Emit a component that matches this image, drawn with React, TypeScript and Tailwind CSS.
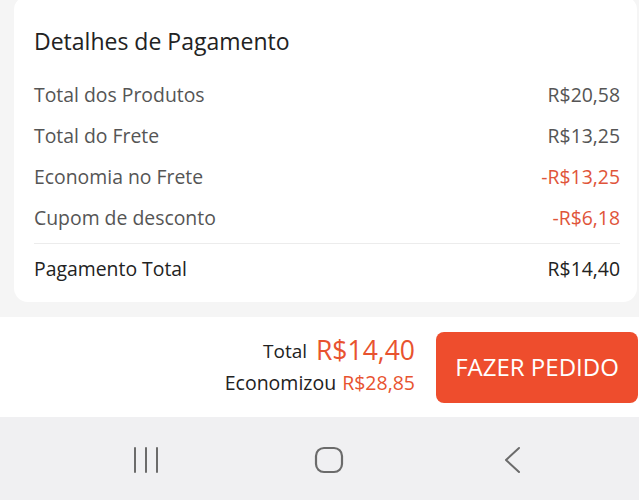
import type { ReactNode } from 'react';

// Linha simples de resumo: rótulo à esquerda, valor à direita
function Row({ label, value, accent }: { label: string; value: string; accent?: boolean }) {
  return (
    <div className="flex h-[41px] items-center justify-between">
      <span className="text-[19.4px] text-[#555555]">{label}</span>
      <span className={accent ? 'text-[19.4px] text-[#e0553a]' : 'text-[19.4px] text-[#555555]'}>{value}</span>
    </div>
  );
}

function NavButton({ children }: { children: ReactNode }) {
  return <div className="flex h-[26px] w-[40px] items-center justify-center">{children}</div>;
}

export default function App() {
  return (
    <div className="flex h-[500px] w-[639px] flex-col overflow-hidden bg-[#f5f5f5] font-['Open_Sans',sans-serif]">
      {/* Card de detalhes */}
      <div className="-mt-[4px] ml-[14px] mr-[2px] rounded-[14px] bg-white pl-[20px] pr-[17px] pt-[30px] pb-[8px]">
        <h2 className="mb-[18px] h-[30px] text-[23px] leading-[30px] text-[#222222]">Detalhes de Pagamento</h2>
        <Row label="Total dos Produtos" value="R$20,58" />
        <Row label="Total do Frete" value="R$13,25" />
        <Row label="Economia no Frete" value="-R$13,25" accent />
        <Row label="Cupom de desconto" value="-R$6,18" accent />
        <div className="mt-[5px] h-px bg-[#ececec]" />
        <div className="flex h-[50px] items-center justify-between text-[19.4px] text-[#222222]">
          <span>Pagamento Total</span>
          <span>R$14,40</span>
        </div>
      </div>

      {/* Barra inferior com total e botão */}
      <div className="mt-[15px] flex h-[100px] items-center justify-end bg-white pr-[1px]">
        <div className="mr-[21px] flex flex-col items-end">
          <div className="flex h-[32px] items-center gap-[9px]">
            <span className="text-[19px] text-[#222222]">Total</span>
            <span className="text-[26.5px] text-[#e8532f]">R$14,40</span>
          </div>
          <div className="flex h-[32px] items-center gap-[6px] text-[19.5px]">
            <span className="text-[#222222]">Economizou</span>
            <span className="text-[#e8532f]">R$28,85</span>
          </div>
        </div>
        <button className="flex h-[71px] w-[202px] items-center justify-center rounded-[8px] bg-[#ee4d2d] text-[24px] text-white">
          FAZER PEDIDO
        </button>
      </div>

      {/* Barra de navegação do sistema */}
      <div className="flex flex-1 items-center bg-[#f0f0f2] pl-[126px] pt-[3px]">
        <div className="flex w-[406px] items-center justify-between">
          <NavButton>
            <svg width="26" height="26" viewBox="0 0 26 26" fill="none" stroke="#6b6b6b" strokeWidth="2" strokeLinecap="round">
              <path d="M2 1v24M13 1v24M24 1v24" />
            </svg>
          </NavButton>
          <NavButton>
            <svg width="30" height="28" viewBox="0 0 30 28" fill="none" stroke="#6b6b6b" strokeWidth="2.2">
              <rect x="2" y="2" width="26" height="24" rx="8" />
            </svg>
          </NavButton>
          <NavButton>
            <svg width="20" height="28" viewBox="0 0 20 28" fill="none" stroke="#6b6b6b" strokeWidth="2" strokeLinecap="round" strokeLinejoin="round">
              <path d="M17 2L4 14l13 12" />
            </svg>
          </NavButton>
        </div>
      </div>
    </div>
  );
}
